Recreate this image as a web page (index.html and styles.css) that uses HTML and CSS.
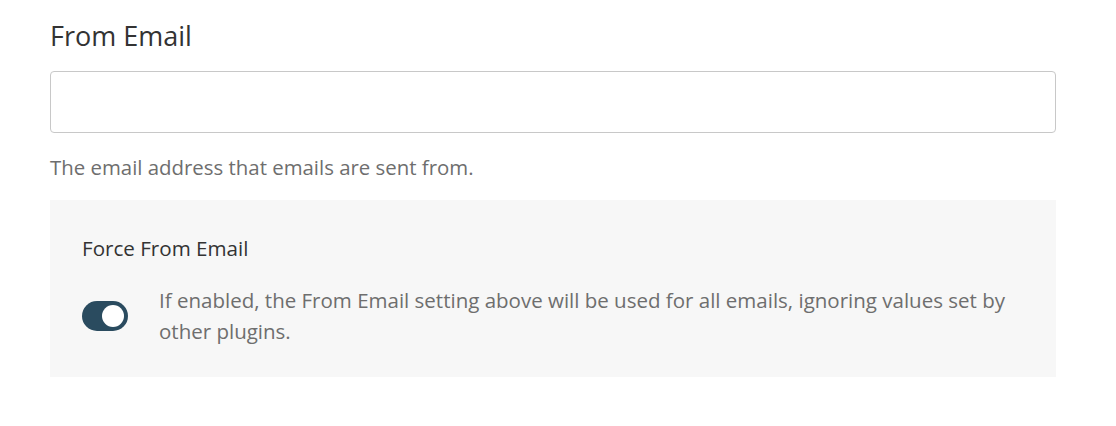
FILE: index.html
```html
<!DOCTYPE html>
<html lang="en">
<head>
    <meta charset="UTF-8">
    <meta name="viewport" content="width=device-width, initial-scale=1.0">
    <title>From Email</title>
    <link rel="stylesheet" href="styles.css">
</head>
<body>
    <div class="setting">
        <h2 class="setting-title">From Email</h2>
        <input type="text" class="setting-input" id="fromEmail" name="fromEmail">
        <p class="setting-desc">The email address that emails are sent from.</p>

        <div class="sub-setting">
            <h3 class="sub-title">Force From Email</h3>
            <div class="toggle-row">
                <label class="toggle">
                    <input type="checkbox" checked>
                    <span class="toggle-track"></span>
                </label>
                <p class="toggle-desc">If enabled, the From Email setting above will be used for all emails, ignoring values set by other plugins.</p>
            </div>
        </div>
    </div>
</body>
</html>
```

FILE: styles.css
```css
body {
    margin: 0;
    background: #fff;
    font-family: "Open Sans", "Noto Sans", sans-serif;
}
.setting {
    padding: 18px 60px 0 50px;
}
.setting-title {
    margin: 0;
    font-size: 27px;
    line-height: 36px;
    font-weight: 500;
    color: #333;
}
.setting-input {
    display: block;
    box-sizing: border-box;
    width: 100%;
    height: 62px;
    margin-top: 17px;
    border: 1px solid #c8c8c8;
    border-radius: 4px;
    background: #fff;
}
.setting-desc {
    margin: 20px 0 0;
    font-size: 20.4px;
    line-height: 28px;
    color: #6e6e6e;
}
.sub-setting {
    margin-top: 19px;
    background: #f7f7f7;
    padding: 35px 32px 30px;
}
.sub-title {
    margin: 0;
    font-size: 20.6px;
    line-height: 27px;
    font-weight: 500;
    color: #333;
}
.toggle-row {
    display: flex;
    align-items: center;
    gap: 31px;
    margin-top: 23px;
}
.toggle {
    flex: none;
    display: block;
}
.toggle input {
    display: none;
}
.toggle-track {
    display: block;
    position: relative;
    width: 46px;
    height: 30px;
    border-radius: 15px;
    background: #2a4b5f;
}
.toggle-track::after {
    content: "";
    position: absolute;
    top: 4px;
    right: 4px;
    width: 22px;
    height: 22px;
    border-radius: 50%;
    background: #fff;
}
.toggle-desc {
    margin: 0;
    font-size: 20.5px;
    line-height: 31px;
    color: #6e6e6e;
}
```
